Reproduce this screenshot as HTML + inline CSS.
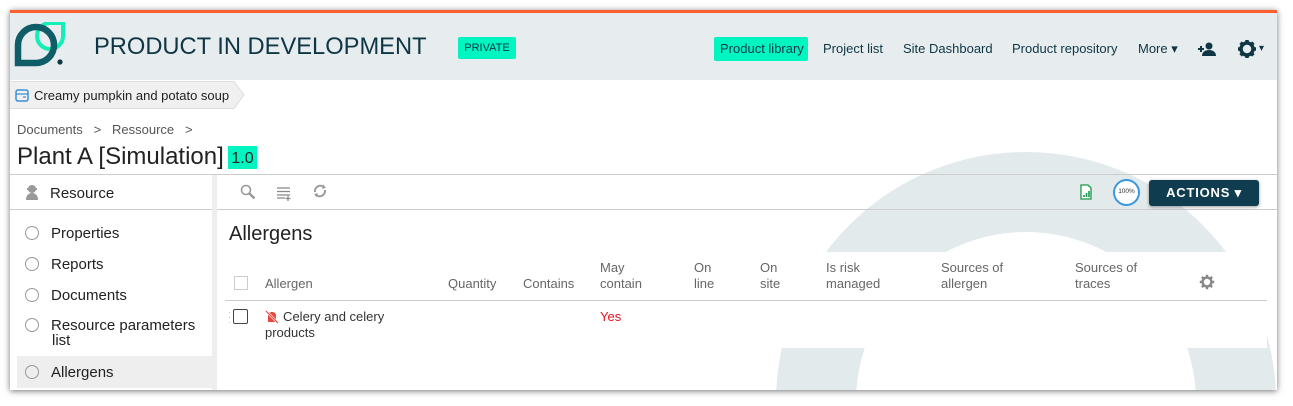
<!DOCTYPE html>
<html style="overflow:hidden;height:406px"><head><style>
*{box-sizing:border-box;margin:0;padding:0}
body{width:1293px;height:406px;background:#fff;font-family:"Liberation Sans",sans-serif;position:relative;overflow:hidden;color:#222}
.frame{position:absolute;left:10px;top:10px;width:1267px;height:380px;background:#fff;box-shadow:0 1px 6px rgba(0,0,0,.55);overflow:hidden}
.top{position:absolute;left:0;top:0;width:100%;height:3px;background:#ff5f2e}
.hdr{position:absolute;left:0;top:3px;width:100%;height:67px;background:#e7ecee}
.abs{position:absolute;white-space:nowrap}
.nav{font-size:13px;color:#0f3644;top:31px}
.ring{position:absolute;left:766px;top:142px;width:500px;height:500px;border-radius:50%;border:80px solid #e3eaec}
</style></head><body>
<div class="frame">
<div class="ring"></div>
<div class="top"></div>
<div class="hdr"></div>
<svg class="abs" style="left:4px;top:12px" width="52" height="46" viewBox="0 0 52 46">
<path d="M49 1 H36 A13 13 0 0 0 23 14 A13 13 0 0 0 36 27 A13 13 0 0 0 49 14 Z" fill="none" stroke="#12f0b8" stroke-width="4"/>
<path d="M4 41 V23 A18 18 0 1 1 22 41 Z" fill="none" stroke="#0f5d66" stroke-width="6.5"/>
<circle cx="46" cy="40" r="2.6" fill="#0f3644"/>
</svg>
<div class="abs" style="left:84px;top:24px;font-size:23.7px;color:#0f3644">PRODUCT IN DEVELOPMENT</div>
<div class="abs" style="left:448px;top:27px;height:22px;width:58px;background:#00f5c0;border-radius:2px;font-size:11px;color:#0f3644;line-height:22px;text-align:center">PRIVATE</div>
<div class="abs" style="left:704px;top:27px;width:94px;height:24px;background:#00f5c0;border-radius:2px"></div>
<div class="abs nav" style="left:710px">Product library</div>
<div class="abs nav" style="left:813px">Project list</div>
<div class="abs nav" style="left:893px">Site Dashboard</div>
<div class="abs nav" style="left:1002px">Product repository</div>
<div class="abs nav" style="left:1128px">More ▾</div>
<svg class="abs" style="left:1187px;top:31px" width="20" height="16" viewBox="0 0 20 16"><path d="M1 8h6M4 5v6" stroke="#0f3644" stroke-width="2"/><circle cx="12" cy="5" r="3.5" fill="#0f3644"/><path d="M5 15c0-4 3-6 7-6s7 2 7 6z" fill="#0f3644"/></svg>
<svg class="abs" style="left:1227px;top:29px" width="20" height="20" viewBox="0 0 20 20"><circle cx="10" cy="10" r="6" fill="none" stroke="#0f3644" stroke-width="3.5"/><g stroke="#0f3644" stroke-width="3.5"><path d="M10 1v4M10 15v4M1 10h4M15 10h4M3.6 3.6l2.8 2.8M13.6 13.6l2.8 2.8M3.6 16.4l2.8-2.8M13.6 6.4l2.8-2.8"/></g></svg>
<div class="abs nav" style="left:1249px;top:33px;font-size:10px">▾</div>
<svg class="abs" style="left:0;top:71px" width="236" height="28"><path d="M0 0.5H224L234 14L224 27.5H0" fill="#f0f0f0" stroke="#ddd"/></svg>
<svg class="abs" style="left:5px;top:79px" width="14" height="13"><rect x="1" y="1" width="12" height="11" rx="2" fill="none" stroke="#3a8fd8" stroke-width="1.5"/><path d="M1 5h12M8 8h3" stroke="#3a8fd8" stroke-width="1.2"/></svg>
<div class="abs" style="left:24px;top:78px;font-size:13px;color:#222">Creamy pumpkin and potato soup</div>
<div class="abs" style="left:7px;top:112px;font-size:13px;color:#555">Documents &nbsp;&nbsp;&gt;&nbsp;&nbsp; Ressource &nbsp;&nbsp;&gt;</div>
<div class="abs" style="left:7px;top:133px;font-size:24px;color:#222">Plant A [Simulation]</div>
<div class="abs" style="left:218px;top:136px;width:29px;height:23px;background:#00f5c0;font-size:16px;line-height:25px;text-align:center;color:#222">1.0</div>
<div class="abs" style="left:0;top:164px;width:1267px;height:1px;background:#ccc"></div>
<div class="abs" style="left:202px;top:165px;width:5px;height:215px;background:#eee"></div>
<div class="abs" style="left:0;top:199px;width:202px;height:1px;background:#ccc"></div>
<div class="abs" style="left:207px;top:199px;width:1060px;height:1px;background:#ccc"></div>
<div class="abs" style="left:0;top:165px;width:202px;height:34px;background:#fff"></div>
<div class="abs" style="left:0;top:200px;width:202px;height:180px;background:#fff"></div>
<svg class="abs" style="left:16px;top:174px" width="12" height="16"><circle cx="6" cy="5" r="4" fill="#999"/><rect x="1" y="4" width="10" height="2" fill="#999"/><path d="M0 16c0-5 3-7 6-7s6 2 6 7z" fill="#999"/></svg>
<div class="abs" style="left:40px;top:175px;font-size:15px;color:#222">Resource</div>
<div class="abs" style="left:7px;top:346px;width:195px;height:32px;background:#eee"></div>
<div style="position:absolute;left:15px;top:215px;font-size:15px;color:#222">
<div class="abs" style="top:0"><span style="display:inline-block;width:14px;height:14px;border:1px solid #999;border-radius:50%;vertical-align:-2px;margin-right:12px"></span>Properties</div>
<div class="abs" style="top:31px"><span style="display:inline-block;width:14px;height:14px;border:1px solid #999;border-radius:50%;vertical-align:-2px;margin-right:12px"></span>Reports</div>
<div class="abs" style="top:62px"><span style="display:inline-block;width:14px;height:14px;border:1px solid #999;border-radius:50%;vertical-align:-2px;margin-right:12px"></span>Documents</div>
<div class="abs" style="top:93px;line-height:15px"><span style="display:inline-block;width:14px;height:14px;border:1px solid #999;border-radius:50%;vertical-align:-2px;margin-right:12px"></span>Resource parameters<br><span style="margin-left:27px">list</span></div>
<div class="abs" style="top:139px"><span style="display:inline-block;width:14px;height:14px;border:1px solid #999;border-radius:50%;vertical-align:-2px;margin-right:12px"></span>Allergens</div>
</div>
<svg class="abs" style="left:230px;top:174px" width="16" height="16"><circle cx="6" cy="6" r="4.5" fill="none" stroke="#999" stroke-width="1.6"/><path d="M9.5 9.5l5 5" stroke="#999" stroke-width="2.4"/></svg>
<svg class="abs" style="left:267px;top:176px" width="16" height="15"><path d="M0 2h13M0 5.5h13M0 9h13M0 12h8M11 10v5M8.5 12.5h5" stroke="#888" stroke-width="1.3"/></svg>
<svg class="abs" style="left:302px;top:173px" width="16" height="16"><path d="M3 9A5.5 5.5 0 0 1 12.5 4.5M13 7A5.5 5.5 0 0 1 3.5 11.5" fill="none" stroke="#999" stroke-width="2"/><path d="M11 1.5l3 3.5-4 .8zM5 14.5l-3-3.5 4-.8z" fill="#999"/></svg>
<svg class="abs" style="left:1070px;top:174px" width="12" height="16"><path d="M1 1h7l3 3v11H1z" fill="#fff" stroke="#1a9a46" stroke-width="1.3"/><path d="M4 13v-2M6.5 13v-4M9 13v-6" stroke="#1a9a46" stroke-width="1.6"/></svg>
<div class="abs" style="left:1103px;top:169px;width:27px;height:27px;border:2.5px solid #3a96df;border-radius:50%;font-size:6.5px;line-height:22px;text-align:center;color:#333;background:#fff">100%</div>
<div class="abs" style="left:1139px;top:170px;width:110px;height:26px;background:#0f3d4f;border-radius:3px;box-shadow:0 1px 3px rgba(0,0,0,.4);color:#fff;font-size:13px;font-weight:bold;letter-spacing:.8px;line-height:26px;text-align:center">ACTIONS ▾</div>
<div class="abs" style="left:219px;top:213px;font-size:20px;color:#222">Allergens</div>
<div class="abs" style="left:215px;top:242px;width:1042px;height:96px;background:#fff"></div>
<div style="position:absolute;left:0;top:0;font-size:13px;color:#666">
<div class="abs" style="left:224px;top:266px;width:14px;height:14px;border:1px solid #ccc"></div>
<div class="abs" style="left:255px;top:266px">Allergen</div>
<div class="abs" style="left:438px;top:266px">Quantity</div>
<div class="abs" style="left:513px;top:266px">Contains</div>
<div class="abs" style="left:590px;top:250px;line-height:16px">May<br>contain</div>
<div class="abs" style="left:684px;top:250px;line-height:16px">On<br>line</div>
<div class="abs" style="left:750px;top:250px;line-height:16px">On<br>site</div>
<div class="abs" style="left:816px;top:250px;line-height:16px">Is risk<br>managed</div>
<div class="abs" style="left:931px;top:250px;line-height:16px">Sources of<br>allergen</div>
<div class="abs" style="left:1065px;top:250px;line-height:16px">Sources of<br>traces</div>
</div>
<svg class="abs" style="left:1189px;top:264px" width="16" height="16" viewBox="0 0 20 20"><circle cx="10" cy="10" r="5.5" fill="none" stroke="#888" stroke-width="3"/><g stroke="#888" stroke-width="3"><path d="M10 1v4M10 15v4M1 10h4M15 10h4M3.6 3.6l2.8 2.8M13.6 13.6l2.8 2.8M3.6 16.4l2.8-2.8M13.6 6.4l2.8-2.8"/></g></svg>
<div class="abs" style="left:215px;top:290px;width:1042px;height:1px;background:#ccc"></div>
<div class="abs" style="left:218px;top:300px;font-size:9px;color:#bbb;line-height:5px">·<br>·<br>·</div>
<div class="abs" style="left:223px;top:299px;width:15px;height:15px;border:1.3px solid #444;border-radius:2px"></div>
<svg class="abs" style="left:255px;top:300px" width="14" height="14"><path d="M3 6c0-3 2-4 4-4s4 1 4 4v6H3z" fill="#e8463b"/><path d="M1 1l12 12" stroke="#fff" stroke-width="2.4"/><path d="M1 1l12 12" stroke="#e8463b" stroke-width="1.2"/></svg>
<div class="abs" style="left:255px;top:299px;font-size:13px;color:#333;line-height:16px">&nbsp;&nbsp;&nbsp;&nbsp;&nbsp;Celery and celery<br>products</div>
<div class="abs" style="left:590px;top:299px;font-size:13px;color:#e8121b">Yes</div>
</div>
</body></html>
